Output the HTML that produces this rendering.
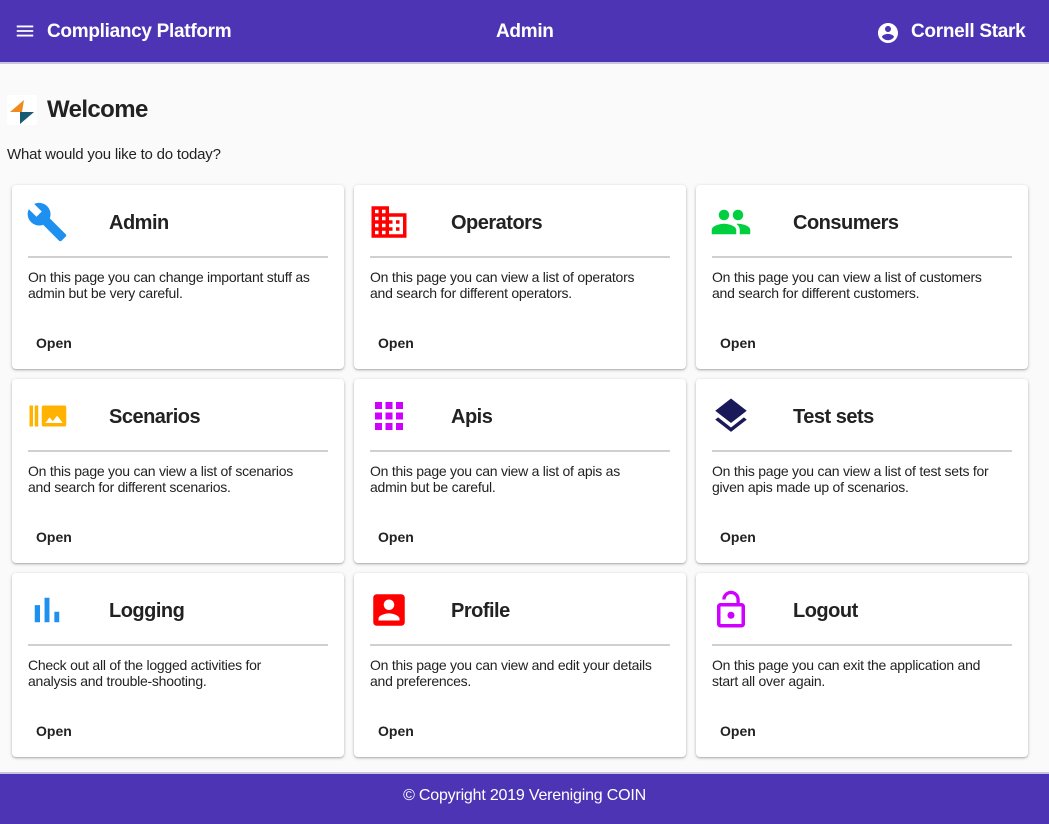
<!DOCTYPE html>
<html><head><meta charset="utf-8"><style>
*{box-sizing:border-box;margin:0;padding:0}
body{width:1049px;height:824px;background:#fafafa;font-family:"Liberation Sans",Arial,sans-serif;color:#222;position:relative;overflow:hidden}
.hdr{position:absolute;left:0;top:0;width:1049px;height:64px;background:#4c34b4;color:#fff;border-bottom:2px solid #c9c4e0}
.hdr .t{position:absolute;top:21px;font-size:19px;font-weight:bold;letter-spacing:-0.3px}
.welcome{position:absolute;left:47px;top:96px;font-size:24px;font-weight:bold;letter-spacing:-0.6px}
.sub{position:absolute;left:7px;top:146px;font-size:15px;letter-spacing:-0.2px}
.card{position:absolute;width:332px;height:184px;background:#fff;border-radius:4px;box-shadow:0 1px 3px rgba(0,0,0,.25),0 1px 1px rgba(0,0,0,.12)}
.card svg{position:absolute;left:14px;top:16px;width:42px;height:42px}
.card .ti{position:absolute;left:97px;top:27px;font-size:20px;font-weight:bold;color:#222;letter-spacing:-0.5px}
.card .hr{position:absolute;left:16px;right:16px;top:71px;height:2px;background:#d0d0d0}
.card .d{position:absolute;left:16px;top:84px;font-size:14px;line-height:16px;color:#222;letter-spacing:-0.25px;white-space:nowrap}
.card .o{position:absolute;left:24px;top:150px;font-size:14px;font-weight:bold;color:#222}
.ftr{position:absolute;left:0;top:772px;width:1049px;height:52px;background:#4c34b4;color:#fff;font-size:16px;text-align:center;padding-top:13px;border-top:2px solid #c9c4e0;letter-spacing:-0.2px}
</style></head><body>
<div class="hdr">
<svg style="position:absolute;left:14px;top:20px" width="22" height="22" viewBox="0 0 24 24"><path fill="#fff" d="M3 18h18v-2H3v2zm0-5h18v-2H3v2zm0-7v2h18V6H3z"/></svg>
<div class="t" style="left:47px">Compliancy Platform</div>
<div class="t" style="left:496px">Admin</div>
<svg style="position:absolute;left:876px;top:21px" width="24" height="24" viewBox="0 0 24 24"><path fill="#fff" d="M12 2C6.48 2 2 6.48 2 12s4.48 10 10 10 10-4.48 10-10S17.52 2 12 2zm0 3c1.66 0 3 1.34 3 3s-1.34 3-3 3-3-1.34-3-3 1.34-3 3-3zm0 14.2c-2.5 0-4.71-1.28-6-3.22.03-1.99 4-3.08 6-3.08 1.99 0 5.97 1.09 6 3.08-1.29 1.94-3.5 3.22-6 3.22z"/></svg>
<div class="t" style="left:911px">Cornell Stark</div>
</div>
<svg style="position:absolute;left:7px;top:95px" width="30" height="30" viewBox="0 0 30 30"><rect width="30" height="30" fill="#fff"/><path fill="#f08a1c" d="M17 5 L3 17 H15 Z"/><path fill="#1a5a73" d="M13 17 H27 L13 29 Z"/></svg>
<div class="welcome">Welcome</div>
<div class="sub">What would you like to do today?</div>

<div class="card" style="left:12px;top:185px"><svg viewBox="0 0 24 24"><path fill="#1e90f0" d="M22.7 19l-9.1-9.1c.9-2.3.4-5-1.5-6.9-2-2-5-2.4-7.4-1.3L9 6 6 9 1.6 4.7C.4 7.1.9 10.1 2.9 12.1c1.9 1.9 4.6 2.4 6.9 1.5l9.1 9.1c.4.4 1 .4 1.4 0l2.3-2.3c.5-.4.5-1.1.1-1.4z"/></svg><div class="ti">Admin</div><div class="hr"></div><div class="d">On this page you can change important stuff as<br>admin but be very careful.</div><div class="o">Open</div></div>

<div class="card" style="left:354px;top:185px"><svg viewBox="0 0 24 24"><path fill="#f00" d="M12 7V3H2v18h20V7H12zM6 19H4v-2h2v2zm0-4H4v-2h2v2zm0-4H4V9h2v2zm0-4H4V5h2v2zm4 12H8v-2h2v2zm0-4H8v-2h2v2zm0-4H8V9h2v2zm0-4H8V5h2v2zm10 12h-8v-2h2v-2h-2v-2h2v-2h-2V9h8v10zm-2-8h-2v2h2v-2zm0 4h-2v2h2v-2z"/></svg><div class="ti">Operators</div><div class="hr"></div><div class="d">On this page you can view a list of operators<br>and search for different operators.</div><div class="o">Open</div></div>

<div class="card" style="left:696px;top:185px"><svg viewBox="0 0 24 24"><path fill="#00d040" d="M16 11c1.66 0 2.99-1.34 2.99-3S17.66 5 16 5c-1.66 0-3 1.34-3 3s1.34 3 3 3zm-8 0c1.66 0 2.99-1.34 2.99-3S9.66 5 8 5C6.34 5 5 6.34 5 8s1.34 3 3 3zm0 2c-2.33 0-7 1.17-7 3.5V19h14v-2.5c0-2.33-4.67-3.5-7-3.5zm8 0c-.29 0-.62.02-.97.05 1.16.84 1.97 1.97 1.97 3.45V19h6v-2.5c0-2.33-4.67-3.5-7-3.5z"/></svg><div class="ti">Consumers</div><div class="hr"></div><div class="d">On this page you can view a list of customers<br>and search for different customers.</div><div class="o">Open</div></div>

<div class="card" style="left:12px;top:379px"><svg viewBox="0 0 24 24"><path fill="#ffb300" d="M2 6h2v12H2zm3 0h2v12H5zm17 0H10c-.55 0-1 .45-1 1v10c0 .55.45 1 1 1h12c.55 0 1-.45 1-1V7c0-.55-.45-1-1-1zM11 16l2.5-3.2 1.8 2.2 2.5-3.2L21 16H11z"/></svg><div class="ti">Scenarios</div><div class="hr"></div><div class="d">On this page you can view a list of scenarios<br>and search for different scenarios.</div><div class="o">Open</div></div>

<div class="card" style="left:354px;top:379px"><svg viewBox="0 0 24 24"><path fill="#d000ff" d="M4 8h4V4H4v4zm6 12h4v-4h-4v4zm-6 0h4v-4H4v4zm0-6h4v-4H4v4zm6 0h4v-4h-4v4zm6-10v4h4V4h-4zm-6 4h4V4h-4v4zm6 6h4v-4h-4v4zm0 6h4v-4h-4v4z"/></svg><div class="ti">Apis</div><div class="hr"></div><div class="d">On this page you can view a list of apis as<br>admin but be careful.</div><div class="o">Open</div></div>

<div class="card" style="left:696px;top:379px"><svg viewBox="0 0 24 24"><path fill="#1a1a5a" d="M11.99 18.54l-7.37-5.73L3 14.07l9 7 9-7-1.63-1.27-7.38 5.74zM12 16l7.36-5.73L21 9l-9-7-9 7 1.63 1.27L12 16z"/></svg><div class="ti">Test sets</div><div class="hr"></div><div class="d">On this page you can view a list of test sets for<br>given apis made up of scenarios.</div><div class="o">Open</div></div>

<div class="card" style="left:12px;top:573px"><svg viewBox="0 0 24 24"><path fill="#1e90f0" d="M5 9.2h3V19H5zM10.6 5h2.8v14h-2.8zm5.6 8H19v6h-2.8z"/></svg><div class="ti">Logging</div><div class="hr"></div><div class="d">Check out all of the logged activities for<br>analysis and trouble-shooting.</div><div class="o">Open</div></div>

<div class="card" style="left:354px;top:573px"><svg viewBox="0 0 24 24"><path fill="#f00" d="M3 5v14c0 1.1.89 2 2 2h14c1.1 0 2-.9 2-2V5c0-1.1-.9-2-2-2H5c-1.11 0-2 .9-2 2zm12 4c0 1.66-1.34 3-3 3s-3-1.34-3-3 1.34-3 3-3 3 1.34 3 3zm-9 8c0-2 4-3.1 6-3.1s6 1.1 6 3.1v1H6v-1z"/></svg><div class="ti">Profile</div><div class="hr"></div><div class="d">On this page you can view and edit your details<br>and preferences.</div><div class="o">Open</div></div>

<div class="card" style="left:696px;top:573px"><svg viewBox="0 0 24 24"><path fill="#d000ff" d="M12 17c1.1 0 2-.9 2-2s-.9-2-2-2-2 .9-2 2 .9 2 2 2zm6-9h-1V6c0-2.76-2.24-5-5-5S7 3.24 7 6h1.9c0-1.71 1.39-3.1 3.1-3.1 1.71 0 3.1 1.39 3.1 3.1v2H6c-1.1 0-2 .9-2 2v10c0 1.1.9 2 2 2h12c1.1 0 2-.9 2-2V10c0-1.1-.9-2-2-2zm0 12H6V10h12v10z"/></svg><div class="ti">Logout</div><div class="hr"></div><div class="d">On this page you can exit the application and<br>start all over again.</div><div class="o">Open</div></div>

<div class="ftr">© Copyright 2019 Vereniging COIN</div>
</body></html>
